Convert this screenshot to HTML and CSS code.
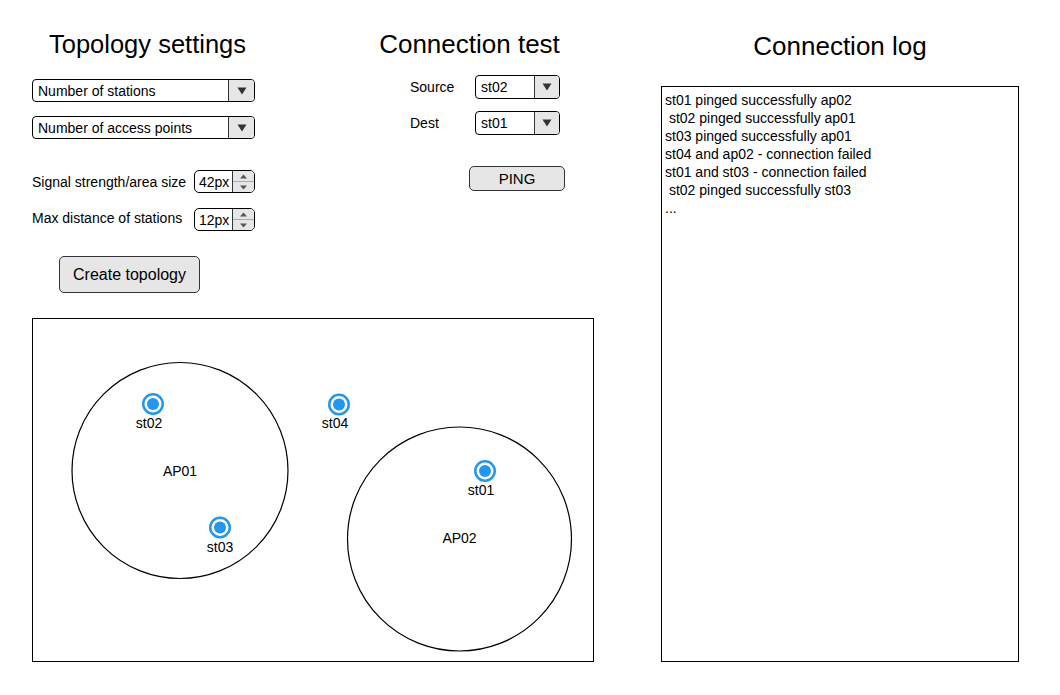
FILE: index.html
```html
<!DOCTYPE html>
<html>
<head>
<meta charset="utf-8">
<title>Topology</title>
<link rel="stylesheet" href="styles.css">
</head>
<body>
<div class="page">
  <div class="left">
    <div class="top">
      <section class="settings">
        <h1 class="title">Topology settings</h1>
        <div class="dropdown wide d1">
          <span class="dd-text">Number of stations</span>
          <span class="dd-btn"><svg width="10" height="8" viewBox="0 0 10 8"><path d="M0.5 0.5 H9.5 L5 7.5 Z" fill="#333"/></svg></span>
        </div>
        <div class="dropdown wide d2">
          <span class="dd-text">Number of access points</span>
          <span class="dd-btn"><svg width="10" height="8" viewBox="0 0 10 8"><path d="M0.5 0.5 H9.5 L5 7.5 Z" fill="#333"/></svg></span>
        </div>
        <div class="field f1">
          <span class="field-label">Signal strength/area size</span>
          <div class="spinner">
            <span class="sp-val">42px</span>
            <span class="sp-btns">
              <span><svg width="7" height="5" viewBox="0 0 7 5"><path d="M0 4.5 H7 L3.5 0.5 Z" fill="#555"/></svg></span>
              <span><svg width="7" height="5" viewBox="0 0 7 5"><path d="M0 0.5 H7 L3.5 4.5 Z" fill="#555"/></svg></span>
            </span>
          </div>
        </div>
        <div class="field f2">
          <span class="field-label up">Max distance of stations</span>
          <div class="spinner">
            <span class="sp-val">12px</span>
            <span class="sp-btns">
              <span><svg width="7" height="5" viewBox="0 0 7 5"><path d="M0 4.5 H7 L3.5 0.5 Z" fill="#555"/></svg></span>
              <span><svg width="7" height="5" viewBox="0 0 7 5"><path d="M0 0.5 H7 L3.5 4.5 Z" fill="#555"/></svg></span>
            </span>
          </div>
        </div>
        <button class="btn create">Create topology</button>
      </section>
      <section class="conn">
        <h1 class="title">Connection test</h1>
        <div class="conn-row r1">
          <span class="conn-label">Source</span>
          <div class="dropdown small">
            <span class="dd-text">st02</span>
            <span class="dd-btn"><svg width="10" height="8" viewBox="0 0 10 8"><path d="M0.5 0.5 H9.5 L5 7.5 Z" fill="#333"/></svg></span>
          </div>
        </div>
        <div class="conn-row r2">
          <span class="conn-label">Dest</span>
          <div class="dropdown small">
            <span class="dd-text">st01</span>
            <span class="dd-btn"><svg width="10" height="8" viewBox="0 0 10 8"><path d="M0.5 0.5 H9.5 L5 7.5 Z" fill="#333"/></svg></span>
          </div>
        </div>
        <button class="btn ping">PING</button>
      </section>
    </div>
    <div class="canvas">
      <svg width="560" height="342" viewBox="0 0 560 342">
        <circle cx="147" cy="151.5" r="108" fill="none" stroke="#000" stroke-width="1.2"/>
        <circle cx="426.5" cy="220" r="112" fill="none" stroke="#000" stroke-width="1.2"/>
        <text class="lbl" x="147" y="157" text-anchor="middle">AP01</text>
        <text class="lbl" x="426.5" y="224" text-anchor="middle">AP02</text>

        <circle cx="120" cy="85" r="9.75" fill="#fff" stroke="#2196F3" stroke-width="2.5"/>
        <circle cx="120" cy="85" r="6" fill="#2196F3"/>
        <text class="lbl" x="116" y="109" text-anchor="middle">st02</text>

        <circle cx="306" cy="85.5" r="9.75" fill="#fff" stroke="#2196F3" stroke-width="2.5"/>
        <circle cx="306" cy="85.5" r="6" fill="#2196F3"/>
        <text class="lbl" x="302" y="109" text-anchor="middle">st04</text>

        <circle cx="187" cy="208.5" r="9.75" fill="#fff" stroke="#2196F3" stroke-width="2.5"/>
        <circle cx="187" cy="208.5" r="6" fill="#2196F3"/>
        <text class="lbl" x="187" y="233" text-anchor="middle">st03</text>

        <circle cx="452" cy="152" r="9.75" fill="#fff" stroke="#2196F3" stroke-width="2.5"/>
        <circle cx="452" cy="152" r="6" fill="#2196F3"/>
        <text class="lbl" x="448" y="176" text-anchor="middle">st01</text>
      </svg>
    </div>
  </div>
  <div class="right">
    <h1 class="title">Connection log</h1>
    <div class="log">
      <div class="log-line">st01 pinged successfully ap02</div>
      <div class="log-line"> st02 pinged successfully ap01</div>
      <div class="log-line">st03 pinged successfully ap01</div>
      <div class="log-line">st04 and ap02 - connection failed</div>
      <div class="log-line">st01 and st03 - connection failed</div>
      <div class="log-line"> st02 pinged successfully st03</div>
      <div class="log-line">...</div>
    </div>
  </div>
</div>
</body>
</html>
```

FILE: styles.css
```css
* { box-sizing: border-box; }
html, body { margin: 0; padding: 0; background: #fff; }
body {
  font-family: "Liberation Sans", Arial, sans-serif;
  color: #000;
  width: 1060px;
  height: 695px;
  overflow: hidden;
}
.page { display: flex; padding-left: 32px; }
.left { width: 562px; display: flex; flex-direction: column; }
.top { display: flex; }

.title {
  margin: 0;
  font-weight: normal;
  font-size: 25.5px;
  line-height: 30px;
  text-align: center;
  white-space: nowrap;
}

.settings {
  width: 223px;
  display: flex;
  flex-direction: column;
  padding-top: 29px;
}
.settings .title { margin-left: 8px; }

.dropdown {
  display: flex;
  height: 23px;
  border: 1px solid #000;
  border-radius: 4px;
  overflow: hidden;
  font-size: 14px;
  background: #fff;
}
.dd-text { flex: 1; padding-left: 5px; display: flex; align-items: center; white-space: nowrap; }
.dd-btn {
  width: 26px;
  background: #e6e6e6;
  border-left: 1px solid #333;
  display: flex;
  align-items: center;
  justify-content: center;
}
.dd-btn svg { display: block; }
.d1 { margin-top: 20px; }
.d2 { margin-top: 14px; }

.field {
  display: flex;
  align-items: center;
  justify-content: space-between;
  font-size: 14px;
}
.f1 { margin-top: 31px; }
.f2 { margin-top: 15px; }
.field-label.up { padding-bottom: 4px; }
.spinner {
  width: 61px;
  height: 23px;
  border: 1px solid #000;
  border-radius: 5px;
  display: flex;
  overflow: hidden;
}
.sp-val { flex: 1; padding-left: 4px; display: flex; align-items: center; }
.sp-btns {
  width: 22px;
  border-left: 1px solid #333;
  background: #e6e6e6;
  display: flex;
  flex-direction: column;
}
.sp-btns span { flex: 1; display: flex; align-items: center; justify-content: center; }
.sp-btns span + span { border-top: 1px solid #aaa; }
.sp-btns svg { display: block; }

.btn {
  font-family: inherit;
  background: #e6e6e6;
  border: 1px solid #333;
  border-radius: 5px;
  color: #000;
  padding: 0;
}
.create {
  align-self: flex-start;
  width: 141px;
  height: 37px;
  margin-top: 25px;
  margin-left: 27px;
  font-size: 16px;
}

.conn {
  margin-left: 119px;
  width: 191px;
  display: flex;
  flex-direction: column;
  padding-top: 29px;
}
.conn .title { font-size: 26px; }
.conn-row { display: flex; align-items: center; padding-left: 36px; font-size: 14px; }
.conn-label { width: 65px; }
.dropdown.small { width: 85px; height: 24px; }
.dropdown.small .dd-btn { width: 25px; }
.r1 { margin-top: 16px; }
.r2 { margin-top: 12px; }
.ping {
  align-self: flex-start;
  width: 96px;
  height: 25px;
  margin-top: 31px;
  margin-left: 95px;
  font-size: 15px;
}

.canvas {
  margin-top: 25px;
  width: 562px;
  height: 344px;
  border: 1px solid #000;
}
.canvas svg { display: block; }
.lbl { font-family: "Liberation Sans", Arial, sans-serif; font-size: 14px; fill: #000; }

.right {
  margin-left: 67px;
  width: 358px;
  display: flex;
  flex-direction: column;
  padding-top: 31px;
}
.right .title { font-size: 26px; }
.log {
  margin-top: 25px;
  height: 576px;
  border: 1px solid #000;
  padding: 4px 3px;
  font-size: 14px;
  line-height: 18px;
}
.log-line { white-space: pre; }
```
